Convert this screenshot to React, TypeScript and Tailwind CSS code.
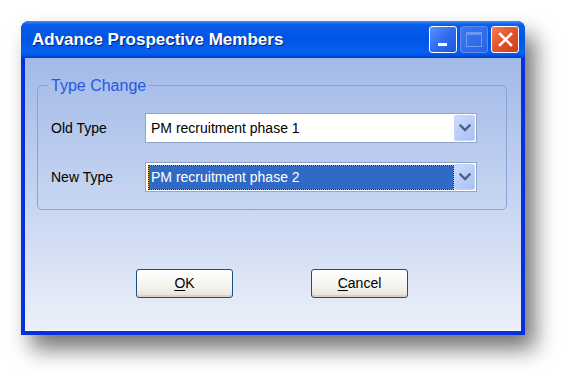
import React from "react";

function Chevron() {
  return (
    <svg width="12" height="8" viewBox="0 0 12 8">
      <path d="M1.5 1.5 L6 6 L10.5 1.5" fill="none" stroke="#4d6185" strokeWidth="2.4" strokeLinecap="square" />
    </svg>
  );
}

function Combo({ text, selected }: { text: string; selected?: boolean }) {
  return (
    <div className="flex h-[30px] w-[332px] items-center border border-[#8fa6c9] bg-white p-[1px]">
      <div className="flex h-full flex-1 items-center pl-[1px]">
        {selected ? (
          <div className="flex h-[25px] w-[306px] bg-[#d9a846]">
            <div className="flex h-full w-full items-center border border-dotted border-[#222] bg-[#316ac5] bg-clip-padding pl-[2px] text-white">
              {text}
            </div>
          </div>
        ) : (
          <div className="pl-[3px] text-black">{text}</div>
        )}
      </div>
      <div className="flex h-[26px] w-[21px] items-center justify-center rounded-[2px] border border-[#c3d4fb] bg-[linear-gradient(135deg,#cddcfd_0%,#b7cbf8_60%,#a9c0f5_100%)]">
        <Chevron />
      </div>
    </div>
  );
}

function XPButton({ label, u }: { label: string; u: number }) {
  return (
    <button className="flex h-[29px] w-[97px] items-center justify-center rounded-[3px] border border-[#1c4f86] bg-[linear-gradient(to_bottom,#ffffff_0%,#f4f3ee_60%,#e6e2d6_100%)] text-[14px] text-black shadow-[inset_0_-2px_0_#d8d2c2]">
      <span>
        {label.slice(0, u)}
        <span className="underline underline-offset-2">{label[u]}</span>
        {label.slice(u + 1)}
      </span>
    </button>
  );
}

export default function App() {
  return (
    <div className="h-[391px] w-[579px] bg-white pl-[21px] pt-[21px]" style={{ fontFamily: '"Liberation Sans", Arial, sans-serif' }}>
      <div className="flex h-[314px] w-[504px] flex-col rounded-t-[8px] bg-[#0831d9] shadow-[10px_14px_22px_rgba(0,0,0,0.55)]">
        {/* Title bar */}
        <div className="flex h-[37px] items-center rounded-t-[8px] bg-[linear-gradient(to_bottom,#3e8ef9_0%,#0a5de9_10%,#0055e5_45%,#0460f0_85%,#0250e0_94%,#0039c8_100%)] pl-[11px] pr-[6px]">
          <div className="flex-1 text-[17px] font-bold text-white [text-shadow:1px_1px_0_#0a1e6e]">Advance Prospective Members</div>
          <div className="flex gap-[3px]">
            <div className="flex h-[27px] w-[28px] items-end rounded-[3px] border border-white bg-[linear-gradient(135deg,#5b93ff_0%,#2f6cf2_50%,#1e55e0_100%)] pb-[6px] pl-[8px]">
              <div className="h-[3px] w-[9px] bg-white" />
            </div>
            <div className="flex h-[27px] w-[28px] items-center justify-center rounded-[3px] border border-[#5b8af0] bg-[linear-gradient(135deg,#3a78f5_0%,#2a63e8_100%)]">
              <div className="h-[15px] w-[16px] border border-[#6f98ef] border-t-[3px]" />
            </div>
            <div className="flex h-[27px] w-[28px] items-center justify-center rounded-[3px] border border-white bg-[linear-gradient(135deg,#f07d58_0%,#e0542c_50%,#c9401d_100%)]">
              <svg width="15" height="15" viewBox="0 0 15 15">
                <path d="M2 2 L13 13 M13 2 L2 13" stroke="white" strokeWidth="2.6" strokeLinecap="square" />
              </svg>
            </div>
          </div>
        </div>
        {/* Body */}
        <div className="mx-[4px] mb-[4px] flex flex-1 flex-col border-b border-b-[#f4f7fd] bg-[linear-gradient(to_bottom,#a2bae8_0%,#c8d6f1_55%,#ecf0f9_100%)] pl-[12px] pr-[14px]">
          <fieldset className="mt-[16px] h-[136px] rounded-[5px] border border-[#87a3d8]">
            <legend className="ml-[10px] px-[3px] pt-[2px] text-[16px] leading-[20px] text-[#2458e0]">Type Change</legend>
            <div className="mt-[17px] flex flex-col gap-[19px] pl-[13px] text-[14px]">
              <div className="flex items-center">
                <div className="w-[94px] text-black">Old Type</div>
                <Combo text="PM recruitment phase 1" />
              </div>
              <div className="flex items-center">
                <div className="w-[94px] text-black">New Type</div>
                <Combo text="PM recruitment phase 2" selected />
              </div>
            </div>
          </fieldset>
          <div className="mt-[59px] flex justify-center gap-[78px]">
            <XPButton label="OK" u={0} />
            <XPButton label="Cancel" u={0} />
          </div>
        </div>
      </div>
    </div>
  );
}
